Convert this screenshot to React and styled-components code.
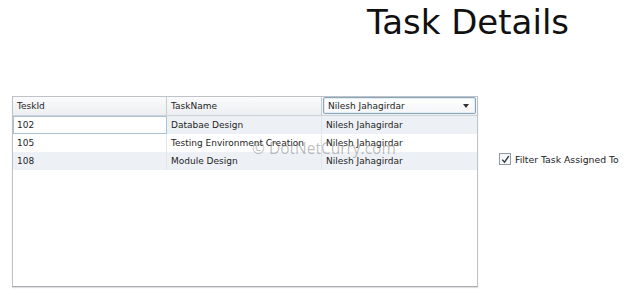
import React from "react";
import styled, { createGlobalStyle } from "styled-components";

const GlobalStyle = createGlobalStyle`
  html, body {
    margin: 0;
    padding: 0;
    background: #ffffff;
  }
  body {
    font-family: "DejaVu Sans", Verdana, sans-serif;
    color: #1e1e1e;
  }
`;

const Page = styled.div`
  width: 624px;
  height: 297px;
  position: relative;
  overflow: hidden;
`;

const Title = styled.h1`
  margin: 0;
  padding: 2px 0 0 367px;
  font-family: "DejaVu Sans", Verdana, sans-serif;
  font-weight: normal;
  font-size: 34px;
  line-height: 40px;
  color: #111;
`;

const Content = styled.div`
  display: flex;
  align-items: flex-start;
  margin-top: 54px;
  padding-left: 12px;
`;

const Grid = styled.div`
  width: 464px;
  height: 189px;
  border: 1px solid #bfc3c8;
  border-bottom-color: #a9adb2;
  box-shadow: 0 1px 1px rgba(0, 0, 0, 0.12);
  background: #fff;
`;

const Row = styled.div`
  display: grid;
  grid-template-columns: 154px 155px 155px;
  height: 18px;
  background: ${(p) =>
    p.$header
      ? "linear-gradient(#fbfbfc, #eceef1)"
      : p.$alt
      ? "#edf1f6"
      : "#ffffff"};
  border-bottom: ${(p) => (p.$header ? "1px solid #cfd3d8" : "none")};
`;

const Cell = styled.div`
  display: flex;
  align-items: center;
  padding-left: 4px;
  font-size: 9px;
  white-space: nowrap;
  border-right: 1px solid ${(p) => (p.$header ? "#c9cdd2" : "#e2e5e9")};
  box-sizing: border-box;
  ${(p) =>
    p.$focus &&
    `
    background: #ffffff;
    border: 1px solid #a9c2d4;
    padding-left: 3px;
  `}
  &:last-child {
    border-right: none;
  }
`;

const Combo = styled.div`
  display: flex;
  align-items: center;
  justify-content: space-between;
  margin: 0 1px 1px 1px;
  padding: 0 6px 0 4px;
  border: 1px solid #8aa6bb;
  border-radius: 2px;
  background: linear-gradient(#ffffff, #f4f6f8);
  box-shadow: inset 0 0 0 1px #e3ecf3;
  font-size: 9px;
`;

const Arrow = styled.span`
  width: 0;
  height: 0;
  border-left: 3px solid transparent;
  border-right: 3px solid transparent;
  border-top: 4px solid #333;
`;

const Filter = styled.label`
  display: flex;
  align-items: center;
  gap: 4px;
  margin: 57px 0 0 21px;
  font-size: 9.3px;
  color: #222;
  white-space: nowrap;
`;

const Box = styled.span`
  width: 10px;
  height: 10px;
  border: 1px solid #8f9aa4;
  background: linear-gradient(#f3f5f7, #ffffff);
  display: flex;
  align-items: center;
  justify-content: center;
`;

const Watermark = styled.div`
  position: absolute;
  left: 252px;
  top: 137px;
  font-family: "Open Sans", "Liberation Sans", sans-serif;
  font-size: 15.5px;
  color: rgba(110, 110, 110, 0.45);
  pointer-events: none;
`;

const tasks = [
  { id: "102", name: "Databae Design", owner: "Nilesh Jahagirdar" },
  { id: "105", name: "Testing Environment Creation", owner: "Nilesh Jahagirdar" },
  { id: "108", name: "Module Design", owner: "Nilesh Jahagirdar" },
];

export default function App() {
  return (
    <Page>
      <GlobalStyle />
      <Title>Task Details</Title>
      <Content>
        <Grid>
          <Row $header>
            <Cell $header>TeskId</Cell>
            <Cell $header>TaskName</Cell>
            <Combo>
              Nilesh Jahagirdar
              <Arrow />
            </Combo>
          </Row>
          {tasks.map((t, i) => (
            <Row key={t.id} $alt={i % 2 === 0}>
              <Cell $focus={i === 0}>{t.id}</Cell>
              <Cell>{t.name}</Cell>
              <Cell>{t.owner}</Cell>
            </Row>
          ))}
        </Grid>
        <Filter>
          <Box>
            <svg width="9" height="9" viewBox="0 0 9 9">
              <path d="M1.2 4.6 L3.5 7.2 L7.8 1.2" fill="none" stroke="#2b3640" strokeWidth="1.4" />
            </svg>
          </Box>
          Filter Task Assigned To
        </Filter>
      </Content>
      <Watermark>© DotNetCurry.com</Watermark>
    </Page>
  );
}
